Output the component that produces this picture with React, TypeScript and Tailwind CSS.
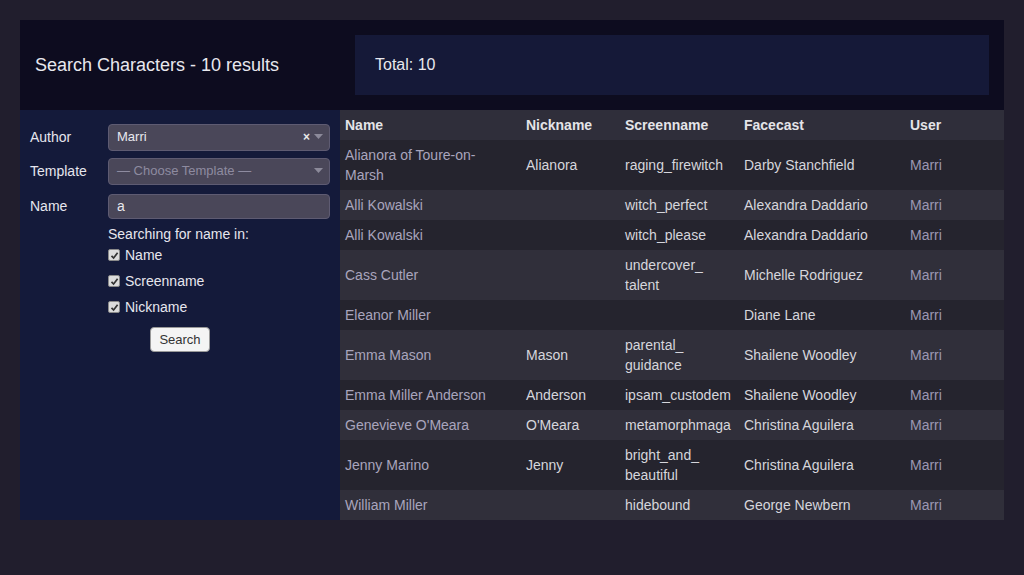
import React from "react";

type Row = { name: string; nick: string; screen: string; face: string; user: string };

const rows: Row[] = [
  { name: "Alianora of Toure-on-Marsh", nick: "Alianora", screen: "raging_firewitch", face: "Darby Stanchfield", user: "Marri" },
  { name: "Alli Kowalski", nick: "", screen: "witch_perfect", face: "Alexandra Daddario", user: "Marri" },
  { name: "Alli Kowalski", nick: "", screen: "witch_please", face: "Alexandra Daddario", user: "Marri" },
  { name: "Cass Cutler", nick: "", screen: "undercover_\u200Btalent", face: "Michelle Rodriguez", user: "Marri" },
  { name: "Eleanor Miller", nick: "", screen: "", face: "Diane Lane", user: "Marri" },
  { name: "Emma Mason", nick: "Mason", screen: "parental_\u200Bguidance", face: "Shailene Woodley", user: "Marri" },
  { name: "Emma Miller Anderson", nick: "Anderson", screen: "ipsam_custodem", face: "Shailene Woodley", user: "Marri" },
  { name: "Genevieve O'Meara", nick: "O'Meara", screen: "metamorphmaga", face: "Christina Aguilera", user: "Marri" },
  { name: "Jenny Marino", nick: "Jenny", screen: "bright_and_\u200Bbeautiful", face: "Christina Aguilera", user: "Marri" },
  { name: "William Miller", nick: "", screen: "hidebound", face: "George Newbern", user: "Marri" },
];

function Check({ label }: { label: string }) {
  return (
    <label className="flex items-center h-[26px] text-[14px] text-[#e6e6ee]">
      <span className="w-[12px] h-[12px] mr-[5px] bg-[#dcdcdc] border border-[#8a8a8a] rounded-[2px] flex items-center justify-center">
        <svg width="9" height="9" viewBox="0 0 9 9">
          <path d="M1.5 4.8 L3.6 7 L7.6 1.8" stroke="#333" strokeWidth="1.7" fill="none" />
        </svg>
      </span>
      {label}
    </label>
  );
}

export default function App() {
  return (
    <div className="min-h-[575px] w-full bg-[#211e2d] pt-[20px] px-[20px]" style={{ fontFamily: '"Liberation Sans", Arial, sans-serif' }}>
      <div className="w-[984px]">
        <div className="h-[90px] bg-[#0d0c1f] flex items-center">
          <div className="w-[335px] pl-[15px] text-[18px] text-[#e8e8ee]">Search Characters - 10 results</div>
          <div className="w-[634px] h-[60px] bg-[#151938] flex items-center pl-[20px] text-[16px] text-[#e8e8ee]" style={{ fontFamily: '"Liberation Sans Narrow", "Liberation Sans", sans-serif' }}>
            Total: 10
          </div>
        </div>
        <div className="flex">
          <div className="w-[320px] bg-[#141a3a] pt-[14px] pl-[10px] pr-[10px]">
            <div className="flex items-center h-[26px] mb-[8px]">
              <div className="w-[78px] text-[14px] text-[#e6e6ee]">Author</div>
              <div className="flex-1 h-[27px] bg-[#4a4759] border border-[#5e5b72] rounded-[4px] flex items-center pl-[8px] pr-[6px] text-[13px] text-[#e8e8ee]">
                <span className="flex-1">Marri</span>
                <span className="text-[12px] font-bold text-[#e8e8e8] mr-[4px]">×</span>
                <svg width="9" height="6" viewBox="0 0 9 6"><path d="M0 0 L9 0 L4.5 5 Z" fill="#8c8a9a" /></svg>
              </div>
            </div>
            <div className="flex items-center h-[26px] mb-[10px]">
              <div className="w-[78px] text-[14px] text-[#e6e6ee]">Template</div>
              <div className="flex-1 h-[27px] bg-[#4a4759] border border-[#5e5b72] rounded-[4px] flex items-center pl-[8px] pr-[6px] text-[13px] text-[#8e8ba0]">
                <span className="flex-1">— Choose Template —</span>
                <svg width="9" height="6" viewBox="0 0 9 6"><path d="M0 0 L9 0 L4.5 5 Z" fill="#8c8a9a" /></svg>
              </div>
            </div>
            <div className="flex items-center h-[25px] mb-[5px]">
              <div className="w-[78px] text-[14px] text-[#e6e6ee]">Name</div>
              <div className="flex-1 h-[25px] bg-[#4a4759] border border-[#5e5b72] rounded-[4px] flex items-center pl-[8px] text-[14px] text-[#e8e8ee]">a</div>
            </div>
            <div className="pl-[78px]">
              <div className="text-[14px] text-[#e6e6ee] h-[20px] leading-[20px]">Searching for name in:</div>
              <div className="-mt-[2px]">
                <Check label="Name" />
                <Check label="Screenname" />
                <Check label="Nickname" />
              </div>
              <div className="flex justify-center pr-[78px] mt-[7px]">
                <button className="h-[25px] px-[8px] bg-[#f4f4f4] border border-[#999] rounded-[4px] text-[13px] text-[#333]">Search</button>
              </div>
            </div>
          </div>
          <div className="w-[664px]">
            <table className="w-full border-collapse text-[14px] leading-[20px] table-fixed">
              <colgroup>
                <col className="w-[181px]" />
                <col className="w-[99px]" />
                <col className="w-[119px]" />
                <col className="w-[166px]" />
                <col className="w-[99px]" />
              </colgroup>
              <thead>
                <tr className="bg-[#2f2e3a] text-[#e4e4e8] font-bold text-left">
                  <th className="px-[5px] py-[5px]">Name</th>
                  <th className="px-[5px] py-[5px]">Nickname</th>
                  <th className="px-[5px] py-[5px]">Screenname</th>
                  <th className="px-[5px] py-[5px]">Facecast</th>
                  <th className="px-[5px] py-[5px]">User</th>
                </tr>
              </thead>
              <tbody>
                {rows.map((r, i) => (
                  <tr key={i} className={i % 2 === 0 ? "bg-[#25242e]" : "bg-[#302f3a]"}>
                    <td className="pl-[5px] pr-[14px] py-[5px] text-[#a9a5bd] align-middle">{r.name}</td>
                    <td className="px-[5px] py-[5px] text-[#d6d6dc] align-middle">{r.nick}</td>
                    <td className="px-[5px] py-[5px] text-[#d6d6dc] align-middle break-words">{r.screen}</td>
                    <td className="px-[5px] py-[5px] text-[#d6d6dc] align-middle">{r.face}</td>
                    <td className="px-[5px] py-[5px] text-[#9c98b2] align-middle">{r.user}</td>
                  </tr>
                ))}
              </tbody>
            </table>
          </div>
        </div>
      </div>
    </div>
  );
}
